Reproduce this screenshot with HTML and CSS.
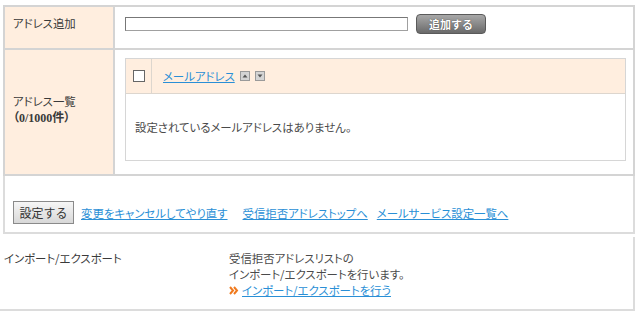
FILE: index.html
```html
<!DOCTYPE html>
<html lang="ja">
<head>
    <meta charset="UTF-8">
    <title>受信拒否アドレス設定</title>
    <link rel="stylesheet" href="styles.css">
</head>
<body>

<form class="form-table">
    <div class="row row-add">
        <div class="label">アドレス追加</div>
        <div class="cell">
            <input type="text" class="addr-input">
            <button type="button" class="btn-add">追加する</button>
        </div>
    </div>

    <div class="row row-list">
        <div class="label label-list">
            アドレス一覧<br>
            <span class="count">（0/1000件）</span>
        </div>
        <div class="cell">
            <div class="addr-table">
                <div class="addr-head">
                    <div class="check-col"><span class="checkbox"></span></div>
                    <div class="name-col">
                        <a href="#" class="link">メールアドレス</a>
                        <!-- 並び替えアイコン -->
                        <svg class="sort" width="10" height="10" viewBox="0 0 10 10">
                            <rect x="0.5" y="0.5" width="9" height="9" fill="#d4d4d4" stroke="#9a9a9a"/>
                            <path d="M2.5 6.5 L5 3.5 L7.5 6.5 Z" fill="#555"/>
                        </svg>
                        <svg class="sort" width="10" height="10" viewBox="0 0 10 10">
                            <rect x="0.5" y="0.5" width="9" height="9" fill="#d4d4d4" stroke="#9a9a9a"/>
                            <path d="M2.5 3.5 L5 6.5 L7.5 3.5 Z" fill="#555"/>
                        </svg>
                    </div>
                </div>
                <div class="addr-body">設定されているメールアドレスはありません。</div>
            </div>
        </div>
    </div>
</form>

<div class="actions">
    <button type="button" class="btn-save">設定する</button>
    <a href="#" class="link">変更をキャンセルしてやり直す</a>
    <a href="#" class="link gap">受信拒否アドレストップへ</a>
    <a href="#" class="link">メールサービス設定一覧へ</a>
</div>

<div class="import">
    <div class="import-title">インポート/エクスポート</div>
    <div class="import-text">
        受信拒否アドレスリストの<br>
        インポート/エクスポートを行います。<br>
        <span class="arrow">
            <svg width="10" height="9" viewBox="0 0 10 9">
                <path d="M1 1 L4 4.5 L1 8" fill="none" stroke="#f07a1e" stroke-width="2"/>
                <path d="M5 1 L8 4.5 L5 8" fill="none" stroke="#f07a1e" stroke-width="2"/>
            </svg>
        </span><a href="#" class="link">インポート/エクスポートを行う</a>
    </div>
</div>

</body>
</html>
```

FILE: styles.css
```css
body {
    margin: 0;
    font-family: "Noto Sans CJK JP", sans-serif;
    font-size: 11.4px;
    font-feature-settings: "palt";
    color: #4a4a4a;
    background-color: #fff;
}
.link {
    color: #2a8fd6;
    text-decoration: underline;
}
.form-table {
    margin: 5px 0 0 3px;
    width: 632px;
    border: 2px solid #d4d4d4;
    border-bottom: none;
    box-sizing: border-box;
}
.row {
    display: grid;
    grid-template-columns: 110px 1fr;
    border-bottom: 2px solid #d4d4d4;
}
.label {
    background-color: #ffeedf;
    border-right: 2px solid #d4d4d4;
    padding-left: 8px;
    color: #3a3a3a;
}
.row-add .label {
    height: 41px;
    line-height: 17px;
    padding-top: 8px;
    box-sizing: border-box;
}
.row-add .cell {
    display: flex;
    align-items: flex-start;
    padding: 7px 0 0 10px;
}
.addr-input {
    width: 283px;
    height: 14px;
    margin-top: 3px;
    padding: 0;
    box-sizing: border-box;
    border: 1px solid #a0a0a0;
    border-top-color: #777;
    border-left-color: #777;
}
.btn-add {
    margin-left: 8px;
    width: 70px;
    height: 20px;
    border: 1px solid #5a5a5a;
    border-radius: 4px;
    background: linear-gradient(#a8a8a8, #6a6a6a);
    color: #fff;
    font-family: inherit;
    font-size: 11px;
    font-weight: bold;
    line-height: 16px;
    padding: 0;
    text-shadow: 0 0 1px #333;
}
.label-list {
    display: flex;
    flex-direction: column;
    justify-content: center;
    line-height: 17px;
    padding-bottom: 4px;
}
.count {
    font-family: "Liberation Serif", "Noto Sans CJK JP", serif;
    font-weight: bold;
    font-size: 12px;
}
.row-list .cell {
    padding: 8px 7px 13px 10px;
}
.addr-table {
    border: 1px solid #d6d6d6;
}
.addr-head {
    display: flex;
    height: 34px;
    background-color: #ffeedf;
    border-bottom: 1px solid #ddd6ce;
}
.check-col {
    width: 25px;
    border-right: 1px solid #ddd6ce;
    display: flex;
    align-items: center;
    justify-content: center;
}
.checkbox {
    width: 10px;
    height: 10px;
    border: 1px solid #666;
    background-color: #fff;
}
.name-col {
    display: flex;
    align-items: center;
    padding-left: 11px;
}
.sort {
    margin-left: 5px;
}
.addr-body {
    height: 66px;
    line-height: 66px;
    padding-left: 9px;
}
.actions {
    margin-left: 3px;
    width: 632px;
    height: 58px;
    box-sizing: border-box;
    border: 2px solid #dcdcdc;
    border-top: none;
    display: flex;
    align-items: center;
    padding: 17px 0 0 8px;
}
.btn-save {
    width: 61px;
    height: 23px;
    padding: 0;
    margin-right: 7px;
    border: 1px solid #8a8a8a;
    background: linear-gradient(#f6f6f6, #d8d8d8);
    font-family: inherit;
    font-size: 12px;
    color: #333;
}
.actions .link {
    margin-right: 9px;
}
.actions .gap {
    margin-left: 6px;
}
.import {
    margin-top: 3px;
    width: 635px;
    height: 74px;
    box-sizing: border-box;
    border-right: 2px solid #dcdcdc;
    border-bottom: 2px solid #dcdcdc;
    display: grid;
    grid-template-columns: 225px 1fr;
    padding: 13px 0 0 4px;
    line-height: 16px;
    color: #3a3a3a;
}
.import-text {
    color: #4a4a4a;
}
.arrow {
    display: inline-block;
    width: 13px;
}
```
